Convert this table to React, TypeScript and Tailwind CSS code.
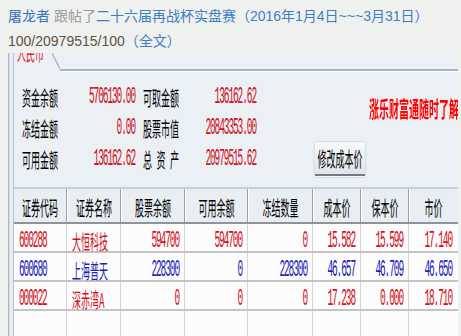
import React from "react";

const COLS = [
  { t: "证券代码", w: "w-[106px]", right: false },
  { t: "证券名称", w: "w-[108px]", right: false },
  { t: "股票余额", w: "w-[128px]", right: true },
  { t: "可用余额", w: "w-[126px]", right: true },
  { t: "冻结数量", w: "w-[130px]", right: true },
  { t: "成本价", w: "w-[96px]", right: true },
  { t: "保本价", w: "w-[96px]", right: true },
  { t: "市价", w: "w-[96px]", right: true },
];

const ROWS = [
  { color: "text-[#d0101c]", cells: ["600288", "大恒科技", "594700", "594700", "0", "15.582", "15.599", "17.140"] },
  { color: "text-[#1c22b4]", cells: ["600680", "上海普天", "228300", "0", "228300", "46.657", "46.709", "46.650"] },
  { color: "text-[#d0101c]", cells: ["000022", "深赤湾A", "0", "0", "0", "17.238", "0.000", "18.710"] },
];

const INFO = [
  ["资金余额", "5706130.00", "可取金额", "136162.62"],
  ["冻结金额", "0.00", "股票市值", "20843353.00"],
  ["可用金额", "136162.62", "总资产", "20979515.62"],
];

const cjk = "font-['Noto_Sans_CJK_SC',sans-serif]";
const mono = "font-['Liberation_Mono','Noto_Sans_CJK_SC',monospace] text-[19px] tracking-[-2.2px]";

// the source image is squashed sideways, so glyphs are stretched a bit taller
function Tall({ children, num }: { children: React.ReactNode; num?: boolean }) {
  return <span className={`inline-block ${num ? "scale-y-[1.3]" : "scale-y-[1.15]"}`}>{children}</span>;
}

function Label({ text }: { text: string }) {
  // 总资产 is spread over the full label width
  return (
    <div className={`${cjk} flex w-[72px] shrink-0 justify-between text-[18px] text-black`}>
      {text.length === 3 ? (
        text.split("").map((c) => <Tall key={c}>{c}</Tall>)
      ) : (
        <Tall>{text}</Tall>
      )}
    </div>
  );
}

function Value({ text, w }: { text: string; w: string }) {
  return (
    <div className={`${mono} ${w} shrink-0 pr-[2px] text-right text-[#d0101c]`}>
      <Tall num>{text}</Tall>
    </div>
  );
}

export default function App() {
  return (
    <div className="h-[336px] w-[461px] overflow-hidden bg-[#eff1ee] font-['Liberation_Sans','Noto_Sans_CJK_SC',sans-serif]">
      <div className="pl-2 pt-[4px] text-[14px]">
        <div className="h-[25px] leading-[25px] text-[#3f7ec0]">
          <span className="text-[#3a72b8]">屠龙者</span> <span className="text-[#9c9c9c]">跟帖了</span>二十六届再战杯实盘赛（2016年1月4日~~~3月31日）
        </div>
        <div className="h-[24px] leading-[24px]">
          <span className="text-[#5e5244]">100/20979515/100</span>
          <span className="text-[#3f7ec0]">（全文）</span>
        </div>
      </div>

      <div className="ml-2 h-[283px] w-[450px] overflow-hidden">
        <div className="flex h-full w-[900px] origin-top-left scale-x-50">
          <div className="w-[2px] shrink-0 bg-[#a9b8cc]" />
          <div className="w-[2px] shrink-0 bg-[#d3dce7]" />
          <div className="w-[6px] shrink-0 bg-[#e9eef2]" />
          <div className="w-[2px] shrink-0 bg-[#b3c1d3]" />

          <div className="flex min-w-0 flex-1 flex-col bg-[#eaf0f4]">
            <div className="flex h-[16px] shrink-0">
              <div className="relative h-full w-[92px] shrink-0 overflow-hidden">
                <div className={`${cjk} -mt-[11px] pl-[6px] text-[18px] leading-[20px] text-[#e8202a]`}>
                  <Tall>人民币</Tall>
                </div>
                <svg className="absolute left-0 top-0" width="92" height="16" viewBox="0 0 92 16">
                  <line x1="76" y1="0" x2="92" y2="16" stroke="#aab2be" strokeWidth="2" />
                </svg>
              </div>
            </div>
            <div className="flex h-[3px] shrink-0">
              <div className="w-[92px] shrink-0" />
              <div className="flex-1 border-b border-white bg-[#a9b3c5]" />
            </div>

            <div className="flex h-[115px] shrink-0">
              <div className="flex flex-col pl-[16px] pt-[10px]">
                {INFO.map((r) => (
                  <div key={r[0]} className="flex h-[31px] items-center">
                    <Label text={r[0]} />
                    <Value text={r[1]} w="w-[156px]" />
                    <div className="w-[14px] shrink-0" />
                    <Label text={r[2]} />
                    <Value text={r[3]} w="w-[156px]" />
                  </div>
                ))}
              </div>
              <div className="flex flex-col pt-[26px]">
                <div className={`${cjk} ml-[224px] whitespace-nowrap text-[20px] font-bold leading-[20px] text-[#ff0000]`}>
                  <span className="inline-block scale-y-[1.1]">涨乐财富通随时了解</span>
                </div>
                <div className="ml-[114px] mt-[23px] w-[104px] rounded-[3px] border border-[#cdd3da] bg-[#f4f7f9] p-[1px]">
                  <div className={`${cjk} flex h-[33px] items-center justify-center border-b-2 border-[#767a80] bg-gradient-to-b from-[#f6f8fa] to-[#dfe5ea] text-[18px] text-black`}>
                    <Tall>修改成本价</Tall>
                  </div>
                </div>
              </div>
            </div>

            <div className="flex h-[37px] shrink-0 border-y-2 border-t-[#c6ced8] border-b-[#8f9499] bg-[#e8eef2]">
              {COLS.map((c, i) => (
                <div
                  key={c.t}
                  className={`${cjk} ${c.w} flex shrink-0 items-center justify-center pt-[4px] text-[18px] text-black ${i > 0 ? "border-l-2 border-l-white" : ""} ${i < COLS.length - 1 ? "border-r-2 border-r-[#9aa0a6]" : ""}`}
                >
                  <Tall>{c.t}</Tall>
                </div>
              ))}
            </div>

            <div className="flex flex-1 flex-col bg-[#fcfcfc]">
              {ROWS.map((r) => (
                <div key={r.cells[0]} className={`flex h-[29px] shrink-0 border-b-2 border-[#c4c4c4] ${r.color}`}>
                  {r.cells.map((v, i) => (
                    <div
                      key={i}
                      className={`${COLS[i].w} flex shrink-0 items-center pt-[8px] ${COLS[i].right ? "justify-end pr-[10px]" : "pl-[10px]"} ${i === 1 ? `${cjk} text-[18px]` : mono} ${i < COLS.length - 1 ? "border-r-2 border-r-[#d6d6d6]" : ""}`}
                    >
                      <Tall num={i !== 1}>{v}</Tall>
                    </div>
                  ))}
                </div>
              ))}
              <div className="flex flex-1">
                {COLS.map((c, i) => (
                  <div key={c.t} className={`${c.w} shrink-0 ${i < COLS.length - 1 ? "border-r-2 border-r-[#d6d6d6]" : ""}`} />
                ))}
              </div>
            </div>
          </div>
        </div>
      </div>
    </div>
  );
}
